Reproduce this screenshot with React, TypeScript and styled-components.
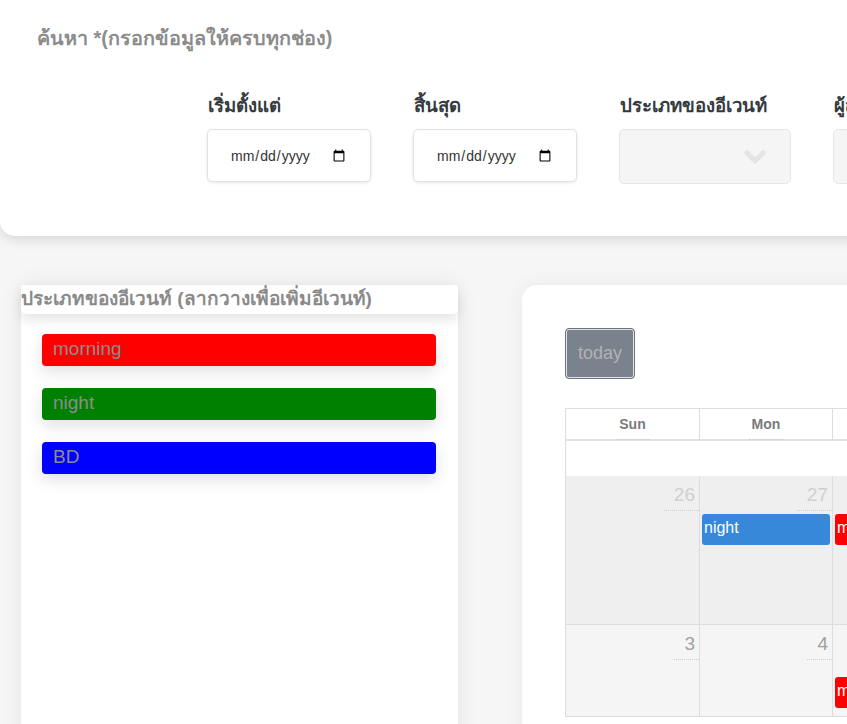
import React from "react";
import styled, { createGlobalStyle } from "styled-components";

const Global = createGlobalStyle`
  html, body { margin: 0; padding: 0; }
  body {
    background: #f6f6f6;
    font-family: "Liberation Sans", "Noto Sans", sans-serif;
    overflow: hidden;
    width: 847px;
    height: 724px;
  }
`;

const Page = styled.div`
  width: 1200px;
  display: flex;
  flex-direction: column;
`;

const SearchCard = styled.section`
  background: #fff;
  border-radius: 0 0 15px 15px;
  box-shadow: 0 4px 12px rgba(0, 0, 0, 0.12);
  height: 236px;
  box-sizing: border-box;
  padding: 27px 37px 0;
`;

const SearchTitle = styled.h2`
  margin: 0;
  font-size: 19.8px;
  line-height: 22px;
  font-weight: 700;
  color: #8c8c8c;
`;

const FieldRow = styled.div`
  display: flex;
  gap: 42px;
  margin-top: 45px;
  padding-left: 170px;
`;

const Field = styled.div`
  display: flex;
  flex-direction: column;
`;

const FieldLabel = styled.label`
  font-size: 18.6px;
  line-height: 24px;
  font-weight: 700;
  color: #343a40;
  margin-bottom: 11px;
  padding-left: 1px;
  white-space: nowrap;
`;

const DateInput = styled.input`
  width: 164px;
  height: 53px;
  box-sizing: border-box;
  border: 1px solid #e3e3e3;
  border-radius: 5px;
  box-shadow: 0 1px 3px rgba(0, 0, 0, 0.1);
  background: #fff;
  padding: 0 22px;
  font-family: "Liberation Sans", "Noto Sans", sans-serif;
  font-size: 14px;
  color: #333;
`;

const SelectBox = styled.div`
  width: 172px;
  height: 55px;
  box-sizing: border-box;
  border: 1px solid #e6e6e6;
  border-radius: 5px;
  background: #f5f5f5;
  display: flex;
  align-items: center;
  justify-content: flex-end;
  padding-right: 24px;
`;

const Panels = styled.div`
  display: flex;
  align-items: flex-start;
  gap: 64px;
  margin-top: 49px;
  padding-left: 21px;
`;

const TypePanel = styled.aside`
  width: 437px;
  height: 460px;
  background: #fff;
  box-shadow: 0 0 20px rgba(0, 0, 0, 0.08);
  display: flex;
  flex-direction: column;
`;

const TypeTitle = styled.h3`
  margin: 0;
  height: 29px;
  background: #fff;
  border-radius: 5px;
  box-shadow: 0 6px 12px rgba(0, 0, 0, 0.1);
  font-size: 19px;
  line-height: 28px;
  font-weight: 700;
  color: #8a8a8a;
  white-space: nowrap;
`;

const TypeList = styled.div`
  display: flex;
  flex-direction: column;
  gap: 22px;
  padding: 20px 22px 0 21px;
`;

const TypeChip = styled.div<{ $bg: string }>`
  height: 32px;
  border-radius: 4px;
  background: ${(p) => p.$bg};
  box-shadow: 0 6px 16px rgba(0, 0, 0, 0.12);
  color: #8c8c8c;
  font-size: 19px;
  line-height: 29px;
  padding-left: 11px;
`;

const CalendarPanel = styled.section`
  width: 660px;
  height: 460px;
  background: #fff;
  border-radius: 15px 0 0 0;
  box-shadow: 0 0 20px rgba(0, 0, 0, 0.06);
  padding: 43px 0 0 43px;
  box-sizing: border-box;
`;

const TodayButton = styled.button`
  width: 70px;
  height: 51px;
  background: #7a828e;
  border: 1px solid #6c7480;
  box-shadow: inset 0 0 0 1px #e4e4e4, inset 0 0 0 2px #7a828e;
  border-radius: 4px;
  color: #b2b2b2;
  font-family: "Liberation Sans", "Noto Sans", sans-serif;
  font-size: 18px;
  padding: 0;
`;

const Grid = styled.div`
  margin-top: 29px;
  display: grid;
  grid-template-columns: 134px 133px 134px 133px 134px;
  border-left: 1px solid #ddd;
`;

const HeadCell = styled.div`
  height: 33px;
  box-sizing: border-box;
  border-top: 1px solid #ddd;
  border-right: 1px solid #ddd;
  border-bottom: 2px solid #e2e2e2;
  display: flex;
  justify-content: center;
  padding-top: 7px;
`;

const HeadText = styled.span`
  font-size: 14px;
  font-weight: 700;
  color: #7a7a7a;
  line-height: 16px;
  height: 24px;
  box-sizing: border-box;
  border-bottom: 1px dotted #ccc;
  padding: 0 3px;
`;

const AllDayRow = styled.div`
  grid-column: 1 / -1;
  height: 35px;
  background: #fff;
`;

const DayCell = styled.div<{ $bg: string; $h: number }>`
  height: ${(p) => p.$h}px;
  box-sizing: border-box;
  background: ${(p) => p.$bg};
  border-right: 1px solid #ddd;
  border-bottom: 1px solid #ddd;
  display: flex;
  flex-direction: column;
  align-items: stretch;
`;

const DayTop = styled.div`
  display: flex;
  justify-content: flex-end;
  height: 35px;
`;

const DayNum = styled.span<{ $c: string }>`
  color: ${(p) => p.$c};
  font-size: 19px;
  line-height: 19px;
  padding: 9px 4px 0 10px;
  box-sizing: border-box;
  height: 35px;
  border-bottom: 1px dotted #ccc;
`;

const EventBar = styled.div<{ $bg: string }>`
  margin: 3px 2px 0 2px;
  height: 31px;
  border-radius: 3px;
  background: ${(p) => p.$bg};
  color: #fff;
  font-size: 16px;
  line-height: 28px;
  padding-left: 2px;
  overflow: hidden;
  white-space: nowrap;
`;

const Chevron = () => (
  <svg width="22" height="14" viewBox="0 0 22 14">
    <path d="M3 3 L11 11 L19 3" fill="none" stroke="#e4e4e4" strokeWidth="5" strokeLinecap="round" strokeLinejoin="round" />
  </svg>
);

const weeks = [
  {
    h: 149,
    bg: "#efefef",
    days: [
      { n: "26", c: "#cfcfcf" },
      { n: "27", c: "#cfcfcf", ev: { t: "night", bg: "#3788d8" } },
      { n: "28", c: "#cfcfcf", ev: { t: "morning", bg: "#ff0000" } },
      { n: "29", c: "#cfcfcf" },
      { n: "30", c: "#cfcfcf" },
    ],
  },
  {
    h: 92,
    bg: "#f5f5f5",
    days: [
      { n: "3", c: "#a0a0a0" },
      { n: "4", c: "#a0a0a0" },
      { n: "5", c: "#a0a0a0", ev: { t: "morning", bg: "#ff0000" }, late: true },
      { n: "6", c: "#a0a0a0" },
      { n: "7", c: "#a0a0a0" },
    ],
  },
];

export default function App() {
  return (
    <>
      <Global />
      <Page>
        <SearchCard>
          <SearchTitle>ค้นหา *(กรอกข้อมูลให้ครบทุกช่อง)</SearchTitle>
          <FieldRow>
            <Field>
              <FieldLabel>เริ่มตั้งแต่</FieldLabel>
              <DateInput type="date" />
            </Field>
            <Field>
              <FieldLabel>สิ้นสุด</FieldLabel>
              <DateInput type="date" />
            </Field>
            <Field>
              <FieldLabel>ประเภทของอีเวนท์</FieldLabel>
              <SelectBox>
                <Chevron />
              </SelectBox>
            </Field>
            <Field>
              <FieldLabel>ผู้สร้างอีเวนท์</FieldLabel>
              <SelectBox>
                <Chevron />
              </SelectBox>
            </Field>
          </FieldRow>
        </SearchCard>
        <Panels>
          <TypePanel>
            <TypeTitle>ประเภทของอีเวนท์ (ลากวางเพื่อเพิ่มอีเวนท์)</TypeTitle>
            <TypeList>
              <TypeChip $bg="#ff0000">morning</TypeChip>
              <TypeChip $bg="#008000">night</TypeChip>
              <TypeChip $bg="#0000ff">BD</TypeChip>
            </TypeList>
          </TypePanel>
          <CalendarPanel>
            <TodayButton>today</TodayButton>
            <Grid>
              {["Sun", "Mon", "Tue", "Wed", "Thu"].map((d) => (
                <HeadCell key={d}>
                  <HeadText>{d}</HeadText>
                </HeadCell>
              ))}
              <AllDayRow />
              {weeks.map((w, wi) =>
                w.days.map((d, di) => (
                  <DayCell key={`${wi}-${di}`} $bg={w.bg} $h={w.h}>
                    <DayTop>
                      <DayNum $c={d.c}>{d.n}</DayNum>
                    </DayTop>
                    {d.ev && (
                      <EventBar $bg={d.ev.bg} style={d.late ? { marginTop: 17 } : undefined}>
                        {d.ev.t}
                      </EventBar>
                    )}
                  </DayCell>
                ))
              )}
            </Grid>
          </CalendarPanel>
        </Panels>
      </Page>
    </>
  );
}
